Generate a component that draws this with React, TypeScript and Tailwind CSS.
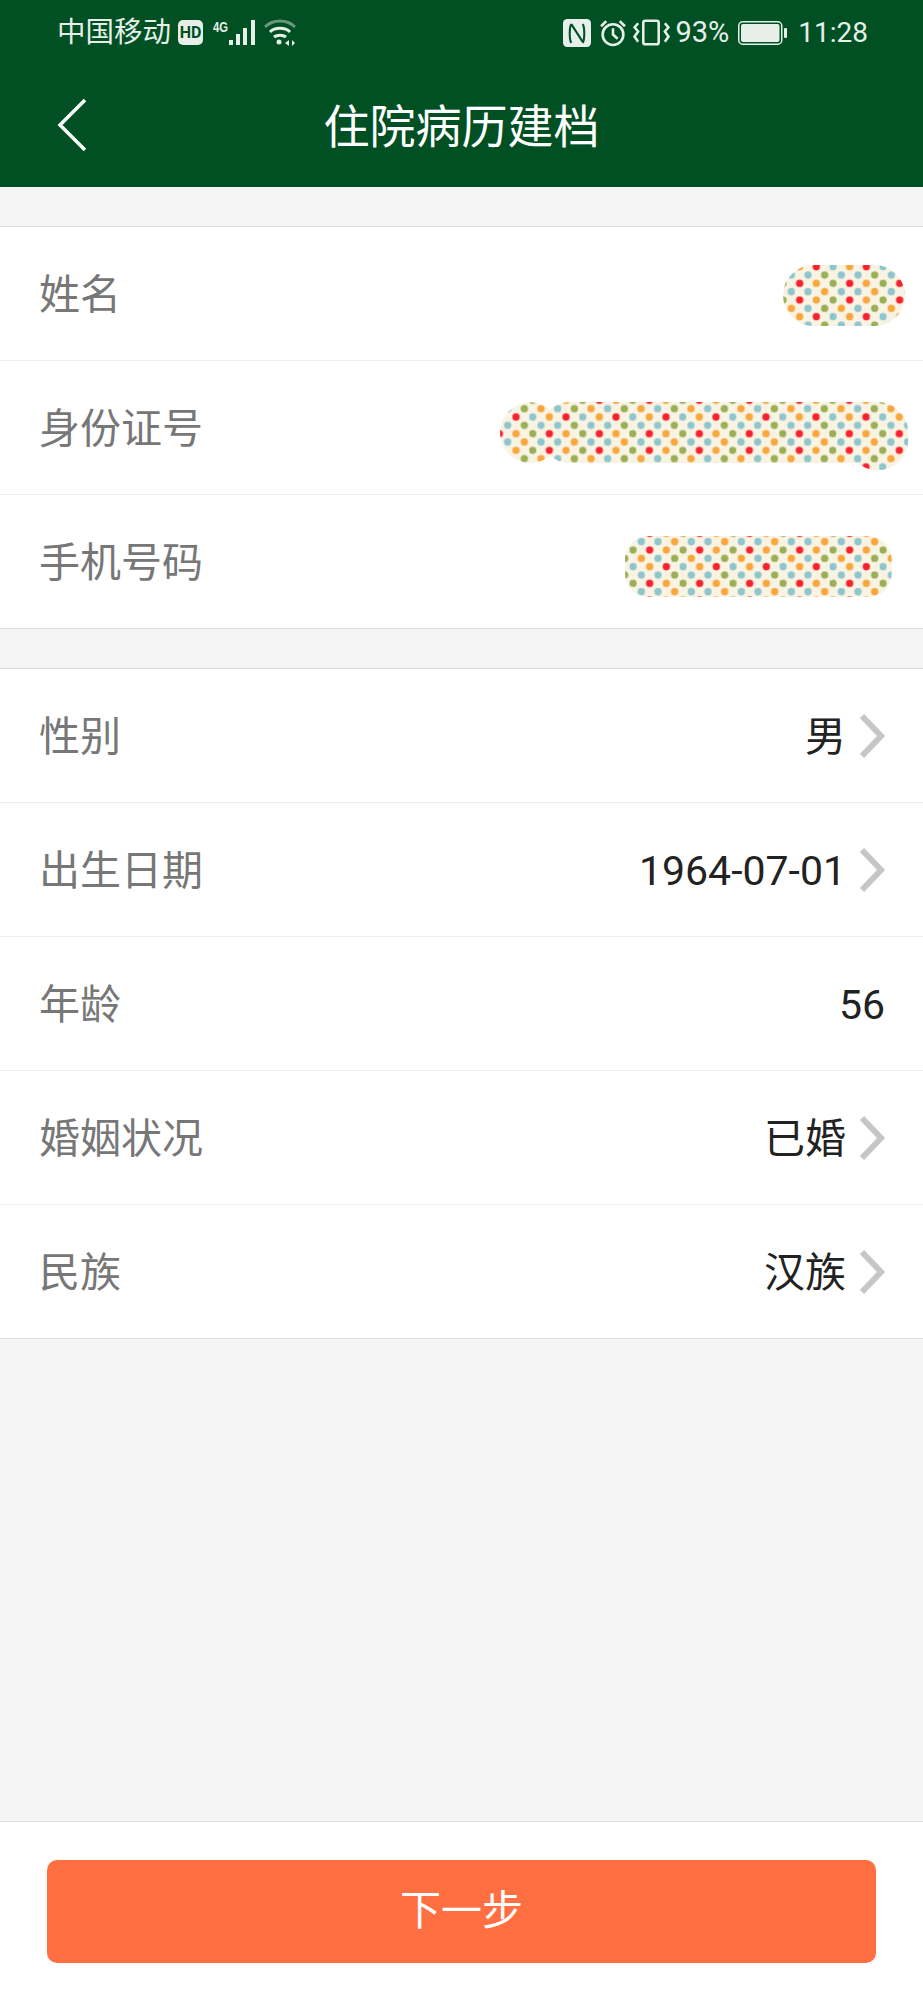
const cjk = "font-['Roboto','Noto_Sans_CJK_SC',sans-serif]";

// dot rows of the mosaic tile, in 3x page coordinates so all blobs share one grid
const dots: [number, number, string][] = [
  [135, 12.5, '#9aae55'], [35, 12.5, '#f9a63c'], [85, 12.5, '#8fc5cd'],
  [110, 37.5, '#f8222f'], [10, 37.5, '#8fc5cd'], [60, 37.5, '#f9a63c'],
  [85, 62.5, '#8fc5cd'], [135, 62.5, '#9aae55'], [35, 62.5, '#8fc5cd'],
  [60, 87.5, '#f8222f'], [110, 87.5, '#f9a63c'], [10, 87.5, '#9aae55'],
  [85, 112.5, '#8fc5cd'], [135, 112.5, '#f9a63c'], [35, 112.5, '#8fc5cd'],
  [60, 137.5, '#f8222f'], [110, 137.5, '#f9a63c'], [10, 137.5, '#9aae55'],
];

function Mosaic({
  id,
  x,
  y,
  w,
  h,
  className,
  children,
}: {
  id: string;
  x: number;
  y: number;
  w: number;
  h: number;
  className: string;
  children: (fill: string) => React.ReactNode;
}) {
  return (
    <svg width={w / 3} height={h / 3} viewBox={`${x} ${y} ${w} ${h}`} className={`block shrink-0 ${className}`}>
      <defs>
        <pattern id={id} patternUnits="userSpaceOnUse" x="0" y="12.5" width="150" height="150">
          <rect width="150" height="150" fill="#f8f3e3" />
          {dots.map(([cx, cy, c], i) => (
            <circle key={i} cx={cx} cy={cy} r="11" fill={c} />
          ))}
        </pattern>
      </defs>
      {children(`url(#${id})`)}
    </svg>
  );
}

function Label({ children }: { children: string }) {
  return <span className="pt-[5px] text-[41px] text-[#777777]">{children}</span>;
}

function Arrow() {
  return (
    <svg width="28" height="46" viewBox="0 0 28 46" fill="none" stroke="#c6c6c6" strokeWidth="6" className="ml-[12px]">
      <path d="M4 3 L23 23 L4 43" />
    </svg>
  );
}

function Row({ label, value, arrow, last }: { label: string; value: string; arrow?: boolean; last?: boolean }) {
  return (
    <div className={`h-[134px] flex items-center justify-between pl-[39px] bg-white border-b ${last ? 'border-[#dcdcdc]' : 'border-[#ececec]'}`}>
      <Label>{label}</Label>
      <div className={`flex items-center ${arrow ? 'pr-[37px]' : 'pr-[38px]'}`}>
        <span className="pt-[5px] text-[41px] text-[#222222]">{value}</span>
        {arrow && <Arrow />}
      </div>
    </div>
  );
}

function StatusLeft() {
  return (
    <div className="flex items-center">
      <span className="text-[28.5px] leading-none text-[#e6efe9]">中国移动</span>
      <span className="ml-[7px] w-[25px] h-[25px] rounded-[5px] bg-[#e6efe9] text-[#005024] text-[16px] font-bold leading-[25px] text-center">HD</span>
      <span className="ml-[10px] -mt-[12px] w-[15px] text-[15px] leading-none font-bold text-[#e6efe9] origin-left scale-x-75 font-['Liberation_Sans',sans-serif]">4G</span>
      <svg width="27" height="26" viewBox="0 0 27 26" className="ml-[1px]" fill="#e6efe9">
        <rect x="0" y="20" width="4" height="5" />
        <rect x="7" y="14" width="4" height="11" />
        <rect x="14" y="8" width="4" height="17" />
        <rect x="22" y="0" width="4" height="25" />
      </svg>
      <svg width="32" height="28" viewBox="0 0 32 28" className="ml-[8px]" fill="none" stroke="#e6efe9" strokeWidth="3">
        <path d="M1 8 C9 0 23 0 31 8" opacity="0.45" />
        <path d="M6 13 C11 8 21 8 26 13" />
        <path d="M10 18 C13 15.500 19 15.500 22 18" />
        <circle cx="15" cy="23" r="2.500" fill="#e6efe9" stroke="none" />
        <path d="M21 24 l4 -3 v6z M31 24 l-3 -3 v6z" fill="#e6efe9" stroke="none" />
      </svg>
    </div>
  );
}

function StatusRight() {
  return (
    <div className="flex items-center">
      <svg width="28" height="28" viewBox="0 0 27 27">
        <rect width="27" height="27" rx="4" fill="#e6efe9" />
        <path d="M8 5 C6 8 6 20 8 23 M8 5 L19 22 M19 5 C21 8 21 20 19 23" stroke="#005024" strokeWidth="2" fill="none" />
      </svg>
      <svg width="28" height="28" viewBox="0 0 27 27" className="ml-[8px]" fill="none" stroke="#e6efe9" strokeWidth="2.500">
        <circle cx="13.500" cy="15" r="10" />
        <path d="M13.500 9 V15 L18 19" />
        <path d="M2 7 L7 2 M25 7 L20 2" />
      </svg>
      <svg width="37" height="27" viewBox="0 0 36 26" className="ml-[6px]" fill="none" stroke="#e6efe9" strokeWidth="2.500">
        <rect x="10" y="1.500" width="15" height="23" rx="2" />
        <path d="M5 4 L1.500 8 L5 12 L1.500 17 L5 22 M31 4 L34.500 8 L31 12 L34.500 17 L31 22" />
      </svg>
      <span className="ml-[5px] text-[29px] leading-none text-[#e6efe9]">93%</span>
      <svg width="50" height="24" viewBox="0 0 50 24" className="ml-[9px]">
        <rect x="0.750" y="0.750" width="43" height="22.500" rx="4" fill="none" stroke="#e6efe9" strokeWidth="1.500" />
        <rect x="3" y="3" width="38.500" height="18" rx="2" fill="#e6efe9" />
        <rect x="46" y="7" width="3" height="10" rx="1" fill="#e6efe9" />
      </svg>
      <span className="ml-[10px] text-[28px] leading-none text-[#e6efe9]">11:28</span>
    </div>
  );
}

export default function App() {
  return (
    <div className={`w-[923px] h-[2000px] flex flex-col bg-[#f5f5f5] ${cjk}`}>
      <header className="h-[187px] bg-[#005024] shrink-0 flex flex-col">
        <div className="h-[66px] flex items-center justify-between pl-[57px] pr-[55px]">
          <StatusLeft />
          <StatusRight />
        </div>
        <div className="grid grid-cols-[1fr_auto_1fr] items-center h-[122px] pl-[56px]">
          <svg width="32" height="54" viewBox="0 0 32 54" fill="none" stroke="#ffffff" strokeWidth="3.500" className="-mt-[3px]">
            <path d="M29 2 L4 27 L29 52" />
          </svg>
          <h1 className="pt-[2px] text-[46px] font-normal text-white -ml-[56px] leading-none">住院病历建档</h1>
        </div>
      </header>

      <section className="mt-[39px] border-t border-[#dcdcdc]">
        <div className="h-[134px] flex items-center justify-between pl-[39px] pr-[18px] bg-white border-b border-[#ececec]">
          <Label>姓名</Label>
          <Mosaic id="m1" x={910} y={45} w={366} h={183} className="mt-[4px]">
            {(fill) => <rect x="910" y="45" width="366" height="183" rx="91.500" fill={fill} />}
          </Mosaic>
        </div>
        <div className="h-[134px] flex items-center justify-between pl-[39px] pr-[14px] bg-white border-b border-[#ececec]">
          <Label>身份证号</Label>
          <Mosaic id="m2" x={62} y={455} w={1226} h={206} className="mt-[18px]">
            {(fill) => (
              <g fill={fill}>
                <circle cx="153" cy="547" r="91" />
                <rect x="180" y="455" width="1107" height="183" rx="91.500" />
                <circle cx="1195" cy="568" r="92" />
              </g>
            )}
          </Mosaic>
        </div>
        <div className="h-[134px] flex items-center justify-between pl-[39px] pr-[31px] bg-white border-b border-[#dcdcdc]">
          <Label>手机号码</Label>
          <Mosaic id="m3" x={436} y={858} w={800} h={183} className="mt-[10px]">
            {(fill) => <rect x="436" y="858" width="800" height="183" rx="70" fill={fill} />}
          </Mosaic>
        </div>
      </section>

      <section className="mt-[39px] border-t border-[#dcdcdc]">
        <Row label="性别" value="男" arrow />
        <Row label="出生日期" value="1964-07-01" arrow />
        <Row label="年龄" value="56" />
        <Row label="婚姻状况" value="已婚" arrow />
        <Row label="民族" value="汉族" arrow last />
      </section>

      <div className="flex-1" />

      <footer className="h-[179px] shrink-0 bg-white border-t border-[#dcdcdc] px-[47px] pt-[38px]">
        <button className="w-full h-[103px] rounded-[10px] bg-[#ff6f42] text-white text-[41px]">下一步</button>
      </footer>
    </div>
  );
}
